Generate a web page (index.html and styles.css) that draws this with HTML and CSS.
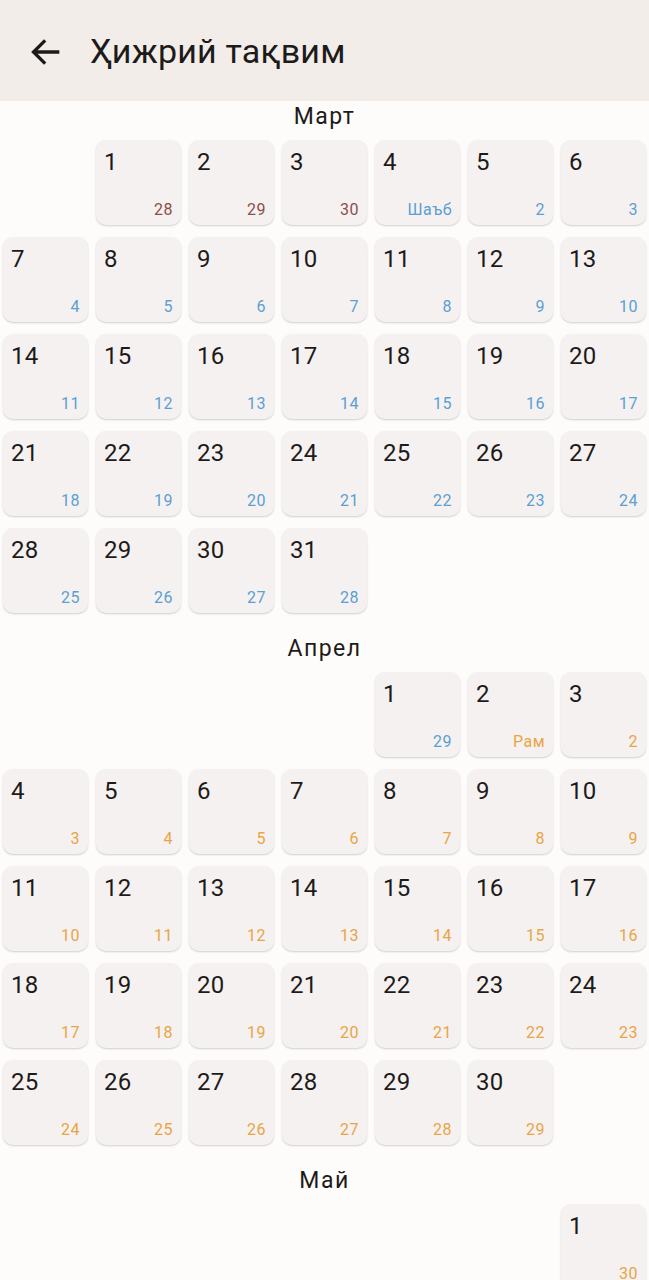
FILE: index.html
```html
<!DOCTYPE html>
<html lang="uz">
<head>
    <meta charset="UTF-8">
    <meta name="viewport" content="width=device-width, initial-scale=1.0">
    <title>Ҳижрий тақвим</title>
    <link rel="stylesheet" href="styles.css">
</head>
<body>

    <header class="top-bar">
        <button class="back-button" aria-label="Орқага">
            <svg viewBox="0 0 24 24" width="40" height="40">
                <path d="M20 12H4.5M11.5 5l-7 7 7 7" fill="none" stroke="#1d1b1a" stroke-width="2"/>
            </svg>
        </button>
        <h1 class="title">Ҳижрий тақвим</h1>
    </header>

    <main id="calendar"></main>

    <script>
        // start = column of the 1st, hijri = [label, colour] for each day
        const months = [
            { name: "Март", days: 31, start: 1, hijri: function(d) {
                if (d <= 3) return [String(27 + d), "prev"];
                if (d === 4) return ["Шаъб", "blue"];
                return [String(d - 3), "blue"];
            }},
            { name: "Апрел", days: 30, start: 4, hijri: function(d) {
                if (d === 1) return ["29", "blue"];
                if (d === 2) return ["Рам", "orange"];
                return [String(d - 1), "orange"];
            }},
            { name: "Май", days: 31, start: 6, hijri: function(d) {
                if (d === 1) return ["30", "orange"];
                if (d === 2) return ["Шав", "green"];
                return [String(d - 1), "green"];
            }}
        ];

        const calendar = document.getElementById("calendar");

        months.forEach(function(month) {
            const section = document.createElement("section");
            section.className = "month";

            const label = document.createElement("h2");
            label.className = "month-name";
            label.textContent = month.name;
            section.appendChild(label);

            const grid = document.createElement("div");
            grid.className = "days";

            for (let i = 0; i < month.start; i++) {
                grid.appendChild(document.createElement("div"));
            }

            for (let d = 1; d <= month.days; d++) {
                const h = month.hijri(d);
                const cell = document.createElement("div");
                cell.className = "day";
                cell.innerHTML = '<span class="greg">' + d + '</span>' +
                    '<span class="hijri ' + h[1] + '">' + h[0] + '</span>';
                grid.appendChild(cell);
            }

            section.appendChild(grid);
            calendar.appendChild(section);
        });
    </script>

</body>
</html>
```

FILE: styles.css
```css
body {
    font-family: Roboto, "Noto Sans", sans-serif;
    background-color: #fdfcfb;
    color: #1d1b1a;
    margin: 0;
    padding: 0;
}
.top-bar {
    height: 101px;
    background-color: #f3edea;
    display: flex;
    align-items: center;
    padding-left: 26px;
    box-sizing: border-box;
}
.back-button {
    background: none;
    border: none;
    padding: 0;
    width: 40px;
    height: 40px;
    margin-top: 2px;
    cursor: pointer;
}
.back-button svg {
    display: block;
}
.title {
    font-size: 34px;
    font-weight: 400;
    margin: 0 0 0 24px;
    letter-spacing: 0.2px;
}
.month {
    padding: 0 3px 20px;
}
.month-name {
    font-size: 23px;
    font-weight: 400;
    text-align: center;
    letter-spacing: 1.5px;
    height: 32px;
    line-height: 32px;
    margin: 0 0 7px;
}
.days {
    display: grid;
    grid-template-columns: repeat(7, 85px);
    column-gap: 8px;
    row-gap: 12px;
}
.day {
    height: 85px;
    background-color: #f5f1f0;
    border-radius: 10px;
    box-shadow: 0 1px 2px rgba(0, 0, 0, 0.18);
    display: flex;
    flex-direction: column;
    justify-content: space-between;
    padding: 8px 8px 6px 8px;
    box-sizing: border-box;
}
.greg {
    font-size: 24px;
    line-height: 28px;
    letter-spacing: 0.3px;
}
.hijri {
    font-size: 16px;
    line-height: 19px;
    text-align: right;
    letter-spacing: 0.5px;
}
.prev {
    color: #8b4d4d;
}
.blue {
    color: #5b9fd3;
}
.orange {
    color: #e8a545;
}
.green {
    color: #5aa36a;
}
```
